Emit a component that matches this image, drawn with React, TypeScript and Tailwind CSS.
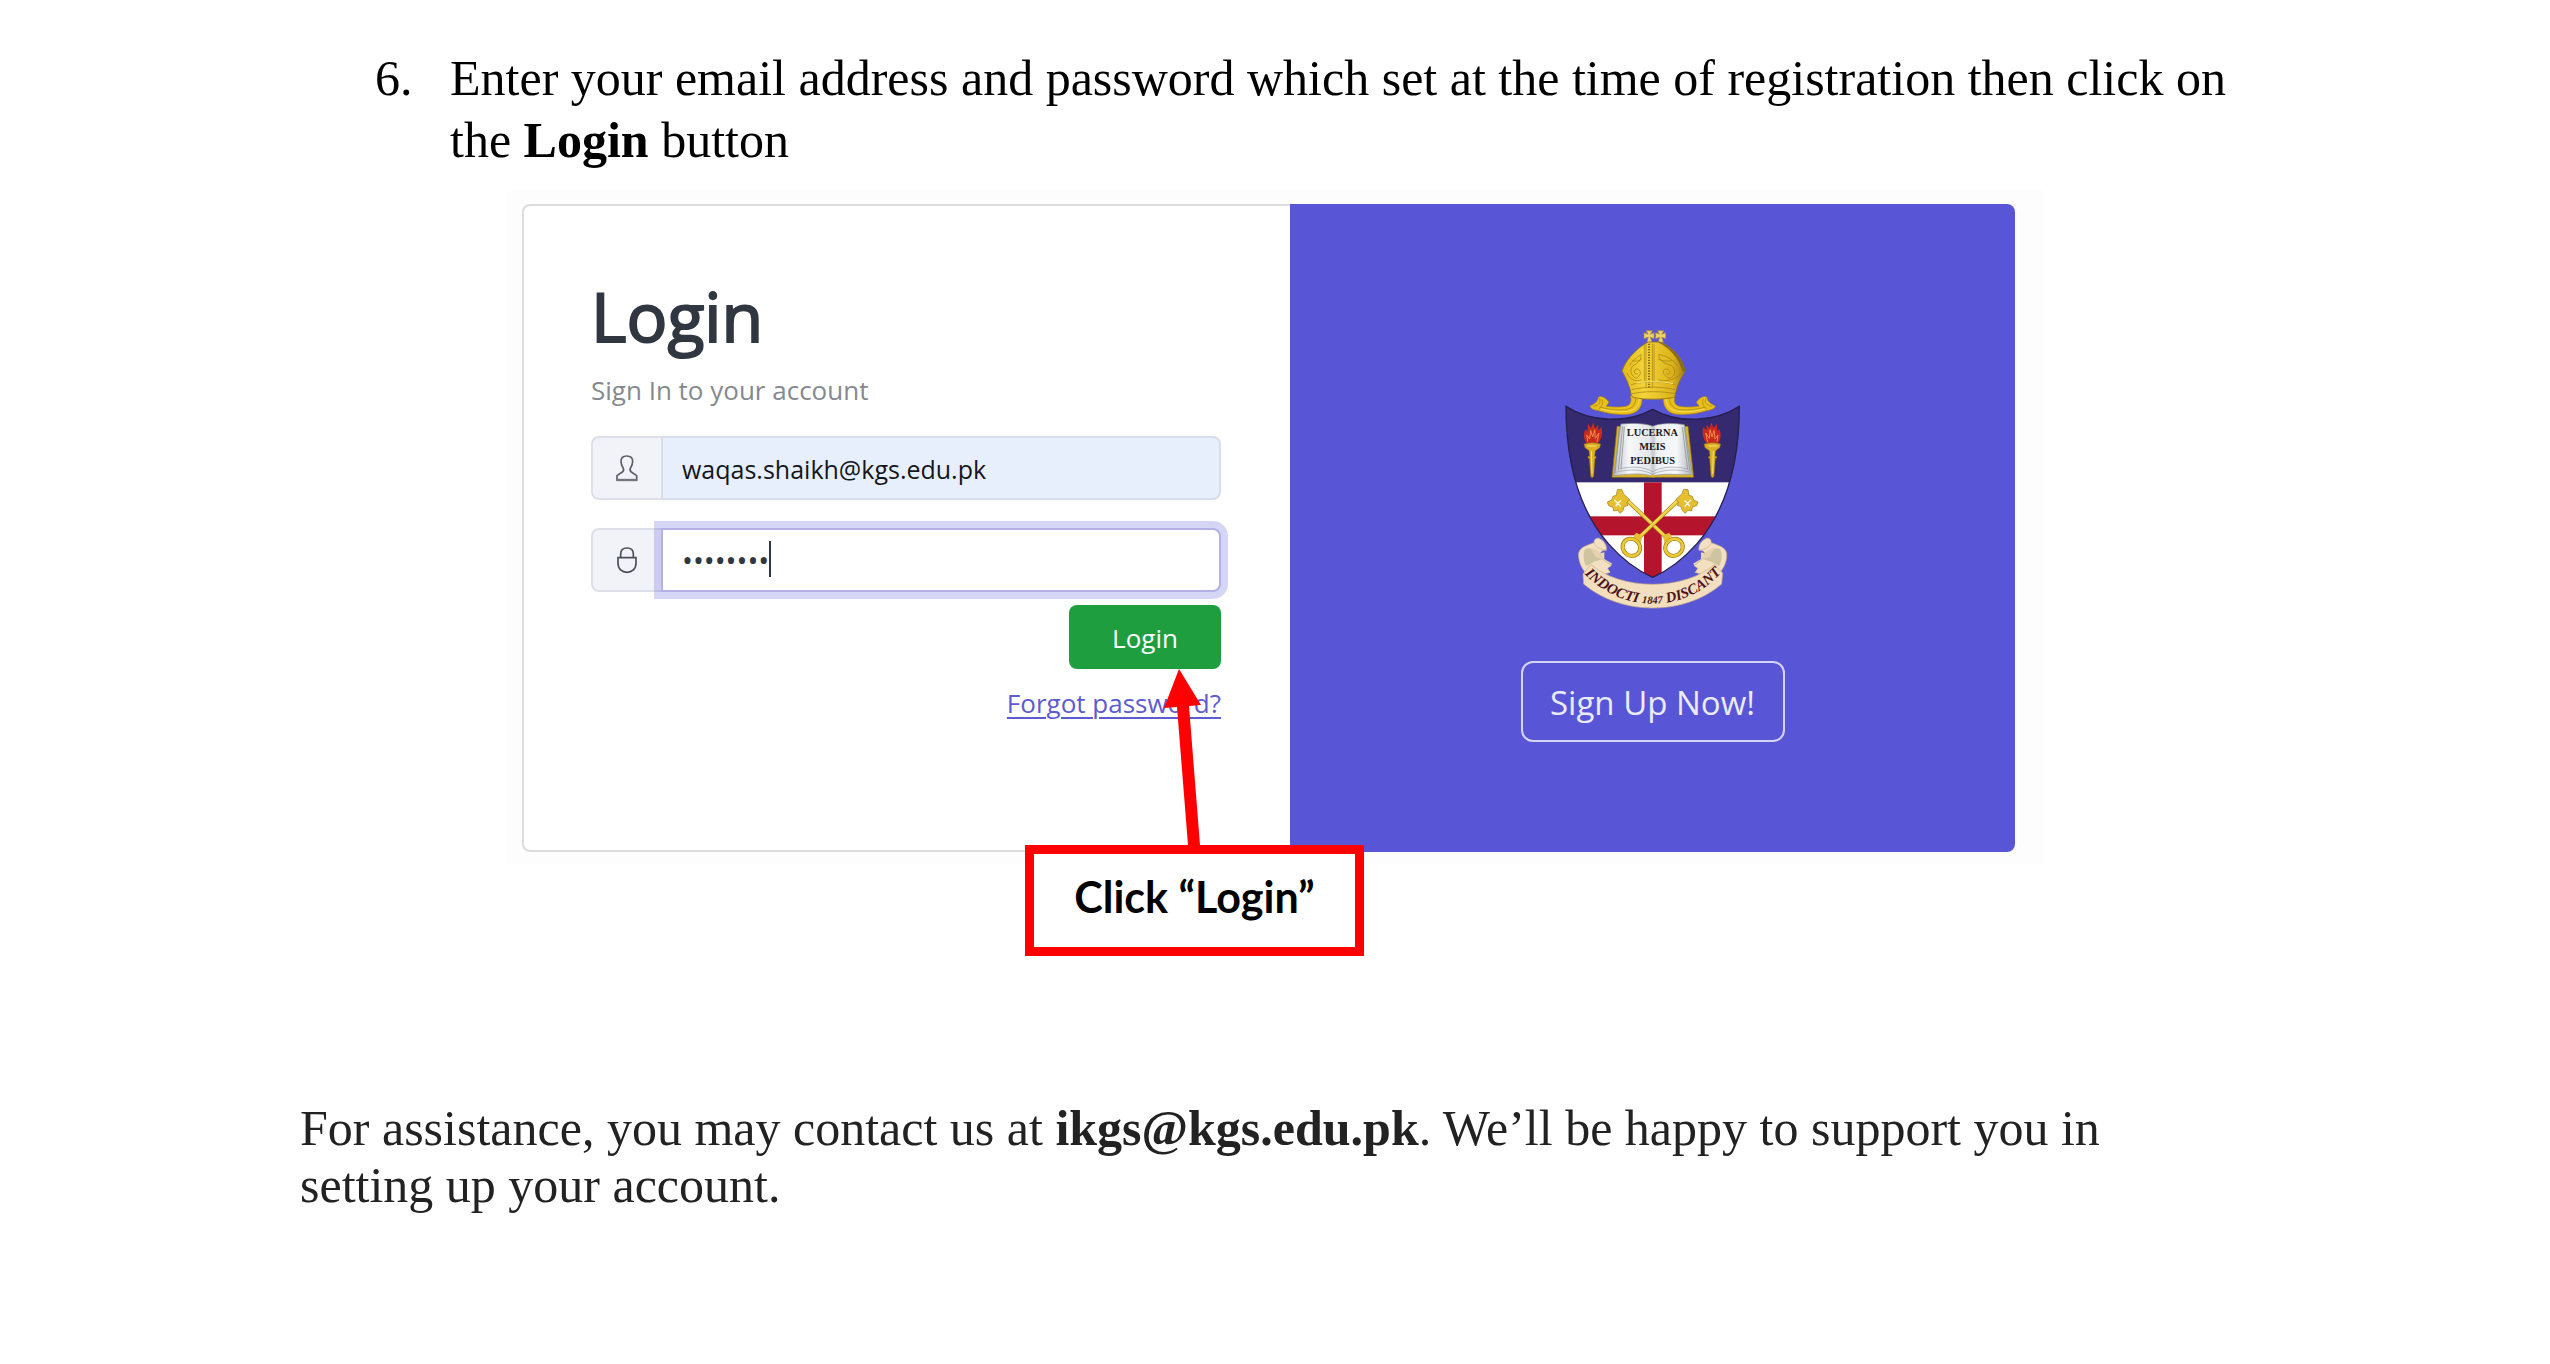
import React, { useState } from 'react';

const UserIcon: React.FC = () => (
    <svg viewBox="106 106 72 84" className="w-6 h-7" fill="none" stroke="#5b5f68" strokeWidth={5} aria-hidden="true">
        <path d="M112 184V171L128 160C133 156 133 152 130 147C126 141 124 134 124 128C124 117 131 112 141 112C151 112 159 117 159 128C159 134 157 141 153 147C150 152 150 156 155 160L171 171V184Z" />
        <path d="M110 184H173" strokeWidth={7} stroke="#73767d" />
    </svg>
);

const LockIcon: React.FC = () => (
    <svg viewBox="104 378 72 84" className="w-6 h-7" fill="none" stroke="#4b4f58" strokeWidth={5} aria-hidden="true">
        <path d="M113 413H167V430C167 447 155 457 140 457C125 457 113 447 113 430Z" />
        <path d="M121 413V402C121 390 129 384 140 384C151 384 159 390 159 402V413" />
    </svg>
);

// One torch, drawn on the left of the shield and mirrored on the right
const Torch: React.FC = () => (
    <g>
        <path d="M168 400C158 385 160 368 166 358L171 366L173 342L182 356L189 338L194 356L204 345L203 362L213 352C218 370 214 388 203 400Z" fill="#c92a1e" />
        <path d="M172 396L169 376L178 388L181 362L187 382L193 360L195 386L206 370L200 397" fill="none" stroke="#f58a4a" strokeWidth={3} />
        <path d="M161 403Q186 396 211 403L208 414L195 423L193 440H197V446H194L190 500Q185 508 181 500L177 446H173V440H178L176 423L164 414Z" fill="#dcae22" stroke="#8f6c16" strokeWidth={1.5} />
        <path d="M183 424L185 492M170 409H198" stroke="#f8e276" strokeWidth={3} />
    </g>
);

const Key: React.FC = () => (
    <g>
        <path d="M284 566L420 695" stroke="#a37f16" strokeWidth={12} />
        <path d="M284 566L420 695" stroke="#f1cf3c" strokeWidth={8} />
        <path d="M284 563L418 690" stroke="#fbec98" strokeWidth={2} />
        <path d="M261 540L274 539L279 552L297 569L289 579L293 588L282 590L278 603L269 611L262 602L250 604L248 593L235 588L231 577L244 571L248 560L258 557Z" fill="#e5bf2f" stroke="#9c7917" strokeWidth={2} />
        <path d="M252 571L262 580L256 590M262 580L272 573M262 580L271 591" fill="none" stroke="#fffbe8" strokeWidth={4} />
        <ellipse cx={431} cy={713} rx={27} ry={25} fill="#fff" stroke="#a37f16" strokeWidth={12} transform="rotate(-35 431 713)" />
        <ellipse cx={431} cy={713} rx={27} ry={25} fill="none" stroke="#ecc937" strokeWidth={8} transform="rotate(-35 431 713)" />
        <path d="M398 678L416 669L425 680L402 698Z" fill="#e5bf2f" />
    </g>
);

const ScrollEnd: React.FC = () => (
    <g stroke="#c9b28a" strokeWidth={2}>
        <path d="M160 790L176 738L222 728L222 748L246 762L232 775L240 790Z" fill="#e9d6b4" stroke="none" />
        <path d="M145 742C141 712 170 708 191 699C192 689 196 684 206 686C224 695 230 710 228 722C213 721 203 731 217 748L243 768L231 776L239 788L190 806C164 794 148 770 145 742Z" fill="#f3e0c0" />
        <path d="M165 718C178 712 204 718 217 748L190 757L168 770C158 752 157 730 165 718Z" fill="#cfc4a0" stroke="none" />
        <path d="M191 699C196 714 208 718 227 721" fill="none" />
        <path d="M181 716C196 713 211 728 217 748L196 742Z" fill="#e6d3ae" stroke="none" />
    </g>
);

const MitreRibbon: React.FC = () => (
    <g>
        <path d="M300 258L335 262C337 286 327 308 300 313C262 318 226 310 201 302C190 301 180 296 179 289C190 284 202 278 204 263C213 256 226 265 234 275C238 279 230 284 228 290C252 293 275 293 290 289C300 285 305 274 300 258Z" fill="#e8c019" stroke="#a88518" strokeWidth={2} />
        <path d="M316 262C318 284 306 297 286 300C262 303 232 299 208 292M206 265C214 277 206 287 188 290M214 268C220 278 216 288 206 298" fill="none" stroke="#b18c16" strokeWidth={2.5} />
        <path d="M327 268C326 288 314 302 292 305C262 308 232 303 212 298" fill="none" stroke="#f9e36a" strokeWidth={2.5} />
    </g>
);

const Crest: React.FC = () => (
    <svg viewBox="95 55 546 846" className="w-[182px] h-[282px]" role="img" aria-label="School crest">
        <defs>
            <linearGradient id="mitre" x1="0" x2="1">
                <stop offset="0" stopColor="#e2b918" />
                <stop offset="0.35" stopColor="#f3d438" />
                <stop offset="0.8" stopColor="#dcb31a" />
                <stop offset="1" stopColor="#a98214" />
            </linearGradient>
            <linearGradient id="page" x1="0" x2="1">
                <stop offset="0" stopColor="#bfc4c8" />
                <stop offset="0.2" stopColor="#f7f8fa" />
                <stop offset="0.46" stopColor="#e3e6ea" />
                <stop offset="0.5" stopColor="#c4c8cc" />
                <stop offset="0.55" stopColor="#edf0f3" />
                <stop offset="0.8" stopColor="#f7f8fa" />
                <stop offset="1" stopColor="#aeb4b8" />
            </linearGradient>
            <clipPath id="shield">
                <path d="M107 290C180 338 290 342 367 299C444 342 554 338 627 290C627 480 580 610 500 702C462 745 420 780 367 803C314 780 272 745 234 702C154 610 107 480 107 290Z" />
            </clipPath>
            <path id="motto" d="M162 792C222 854 290 881 367 882C444 881 512 854 574 788" />
        </defs>

        {/* Mitre */}
        <MitreRibbon />
        <g transform="matrix(-1 0 0 1 734 0)">
            <MitreRibbon />
        </g>
        <g fill="#ecd36a" stroke="#b18f2b" strokeWidth={2}>
            <path d="M348 63L366 63L360 74L371 69V87L360 82L365 98H350L354 82L341 87V69L353 74Z" />
            <path d="M382 63L400 63L394 74L406 69V87L394 82L399 98H384L388 82L376 87V69L387 74Z" />
        </g>
        <path d="M354 97C333 107 290 140 275 184C288 207 298 228 302 252C304 260 306 263 312 264C345 270 390 270 427 264C434 262 435 258 436 250C440 228 451 207 464 184C457 143 424 110 388 97Z" fill="url(#mitre)" stroke="#927215" strokeWidth={2.5} />
        <path d="M382 98C414 112 448 146 456 186L464 184C457 143 424 110 388 97Z" fill="#8b6b19" />
        <g fill="none" stroke="#a07d14" strokeWidth={2}>
            <path d="M342 104V214M371 104V214M347 102V236M366 102V236" />
            <path d="M356 102V238" stroke="#8a6c18" strokeWidth={6} strokeDasharray="4 4" />
            <path d="M302 225C340 214 396 214 436 225M304 240C345 230 394 230 434 240M305 252C345 244 392 244 434 252" />
            <path d="M298 168C308 150 324 142 332 134C334 150 324 160 308 168C296 180 302 200 318 206C334 198 334 178 318 178C306 184 314 196 322 192" />
            <path d="M290 190C298 210 316 218 334 210M304 152C316 158 330 152 334 148" />
            <path d="M440 168C430 150 414 142 386 134C384 150 398 160 424 168C438 180 436 200 418 206C396 198 392 178 410 178C426 184 418 196 408 192" />
            <path d="M452 190C440 210 402 218 384 210M426 152C412 158 392 152 384 148" />
        </g>
        <path d="M318 220C350 214 394 214 428 222" fill="none" stroke="#f8e573" strokeWidth={3} />

        {/* Shield */}
        <g clipPath="url(#shield)">
            <rect x={95} y={280} width={546} height={240} fill="#352a70" />
            <rect x={95} y={518} width={546} height={300} fill="#fff" />
            <rect x={341} y={518} width={53} height={300} fill="#b5142d" />
            <rect x={95} y={620} width={546} height={57} fill="#b5142d" />
        </g>
        <path d="M107 290C180 338 290 342 367 299C444 342 554 338 627 290C627 480 580 610 500 702C462 745 420 780 367 803C314 780 272 745 234 702C154 610 107 480 107 290Z" fill="none" stroke="#251f4d" strokeWidth={4} />

        {/* Open book */}
        <path d="M260 350L245 503H490L473 350Z" fill="#dcb62a" stroke="#8c6c18" strokeWidth={2} />
        <path d="M272 343C308 340 345 340 367 350C389 340 428 340 462 345L486 494C450 498 400 488 367 500C334 488 290 494 250 498Z" fill="url(#page)" stroke="#8b9094" strokeWidth={2} />
        <path d="M267 352L254 492M277 350L264 480M282 350L272 478M456 352L472 480M462 352L479 484" stroke="#8e9498" strokeWidth={2.5} />
        <path d="M256 488C300 476 340 480 367 494C394 480 440 476 482 488M266 478C304 468 344 472 367 486C390 472 430 468 474 478" fill="none" stroke="#999ea3" strokeWidth={2} />
        <path d="M358 503L367 492L376 503Z" fill="#dcb62a" />
        <g fontFamily="'Liberation Serif', serif" fontWeight={700} fill="#17181c" textAnchor="middle">
            <text x={366} y={378} fontSize={31}>LUCERNA</text>
            <text x={366} y={421} fontSize={31}>MEIS</text>
            <text x={367} y={464} fontSize={31}>PEDIBUS</text>
        </g>

        <Torch />
        <g transform="matrix(-1 0 0 1 732 0)">
            <Torch />
        </g>

        {/* Crossed keys */}
        <Key />
        <g transform="matrix(-1 0 0 1 734 0)">
            <Key />
        </g>

        {/* Motto scroll */}
        <ScrollEnd />
        <g transform="matrix(-1 0 0 1 734 0)">
            <ScrollEnd />
        </g>
        <path d="M182 765C225 801 290 823 367 824C444 823 510 801 552 765L577 790L574 823C520 870 445 895 367 895C290 895 215 870 160 823L158 793Z" fill="#f3dfbe" stroke="#c9ad83" strokeWidth={2} />
        <text fontFamily="'Liberation Serif', serif" fontStyle="italic" fontWeight={700} fontSize={44} fill="#4a1218">
            <textPath href="#motto" startOffset="50%" textAnchor="middle">INDOCTI <tspan fontSize={32}>1847</tspan> DISCANT</textPath>
        </text>
    </svg>
);

const LoginForm: React.FC = () => {
    const [email, setEmail] = useState('waqas.shaikh@kgs.edu.pk');
    const [password, setPassword] = useState('password');

    return (
        <form
            className="rounded-l-lg border-2 border-r-0 border-[#dcdddf] bg-white pt-[70px] pl-[67px] pr-[69px] text-[26px] leading-10"
            onSubmit={(e) => e.preventDefault()}
        >
            <h1 className="text-[68px] leading-[80px] text-[#303741] [-webkit-text-stroke:2px_#303741]">Login</h1>
            <p className="mt-[14px] text-[#85898e]">Sign In to your account</p>

            <div className="mt-[26px] flex h-16">
                <label htmlFor="email" aria-label="Email" className="w-[70px] shrink-0 flex items-center justify-center rounded-l-lg border-2 border-r-0 border-[#dde0e8] bg-[#f2f3f8]">
                    <UserIcon />
                </label>
                <input
                    id="email"
                    type="email"
                    value={email}
                    onChange={(e) => setEmail(e.target.value)}
                    className="flex-1 min-w-0 rounded-r-lg border-2 border-[#d8deea] bg-[#e8effc] pt-[2px] px-[19px] text-[25px] text-[#14171c] outline-none"
                />
            </div>

            <div className="relative mt-7 flex h-16">
                <label htmlFor="password" aria-label="Password" className="w-[70px] shrink-0 flex items-center justify-center rounded-l-lg border-2 border-r-0 border-[#dde0e8] bg-[#f2f3f8]">
                    <LockIcon />
                </label>
                <input
                    id="password"
                    type="password"
                    value={password}
                    onChange={(e) => setPassword(e.target.value)}
                    className="flex-1 min-w-0 rounded-r-lg border-2 border-[#b3b0e6] bg-white px-[19px] text-[29px] text-[#303741] outline-none ring-7 ring-[#5856d6]/25"
                />
                <span className="absolute left-[178px] top-[13px] h-9 w-[2px] bg-[#303741]" />
            </div>

            <div className="mt-[13px] flex flex-col items-end">
                <button type="submit" className="h-16 w-[152px] rounded-lg bg-[#1e9e3f] pt-[2px] text-white">Login</button>
                <a href="#forgot" className="mt-[14px] text-[#5d5bd0] underline decoration-2 underline-offset-4">Forgot password?</a>
            </div>
        </form>
    );
};

const App: React.FC = () => {
    return (
        <main className="min-h-screen bg-white">
            <div className="mx-auto w-full max-w-[1950px] pt-[47px] font-['Liberation_Serif',serif] text-[50px]">
                <ol start={6} className="list-none">
                    <li className="flex pl-[75px] leading-[62px] text-black">
                        <span className="w-[75px] shrink-0">6.</span>
                        <p>
                            Enter your email address and password which set at the time of registration then click on the <strong>Login</strong> button
                        </p>
                    </li>
                </ol>

                <figure className="relative mx-auto mt-[19px] w-full max-w-[1536px] bg-[#fdfdfd] pt-[14px] pb-3 pl-[15px] pr-7 font-['Open_Sans','Noto_Sans',sans-serif]">
                    <div className="grid grid-cols-[768fr_725fr] min-h-[648px]">
                        <LoginForm />
                        <div className="flex flex-col items-center rounded-r-lg bg-[#5856d6] pt-[124px]">
                            <Crest />
                            <button type="button" className="mt-[51px] h-[81px] w-[264px] rounded-xl border-2 border-[#d5d4f5] pt-[2px] text-[33px] text-[#ebebf8]">
                                Sign Up Now!
                            </button>
                        </div>
                    </div>

                    {/* Callout over the screenshot */}
                    <figcaption className="absolute left-[518px] top-[479px] flex w-[339px] flex-col">
                        <svg viewBox="0 0 339 176" className="h-[176px] w-[339px]" fill="#fe0000" aria-hidden="true">
                            <path d="M154 0L176 36L164 37L175 176H163L152 38L139 39Z" />
                        </svg>
                        <span className="flex h-[111px] items-center justify-center border-[9px] border-[#fe0000] bg-white pb-2 font-['Lato',sans-serif] text-[43px] font-bold leading-none text-black">
                            Click “Login”
                        </span>
                    </figcaption>
                </figure>

                <p className="mt-[236px] max-w-[1880px] leading-[57px] text-[#222222]">
                    For assistance, you may contact us at <strong>ikgs@kgs.edu.pk</strong>. We’ll be happy to support you in setting up your account.
                </p>
            </div>
        </main>
    );
};

export default App;
